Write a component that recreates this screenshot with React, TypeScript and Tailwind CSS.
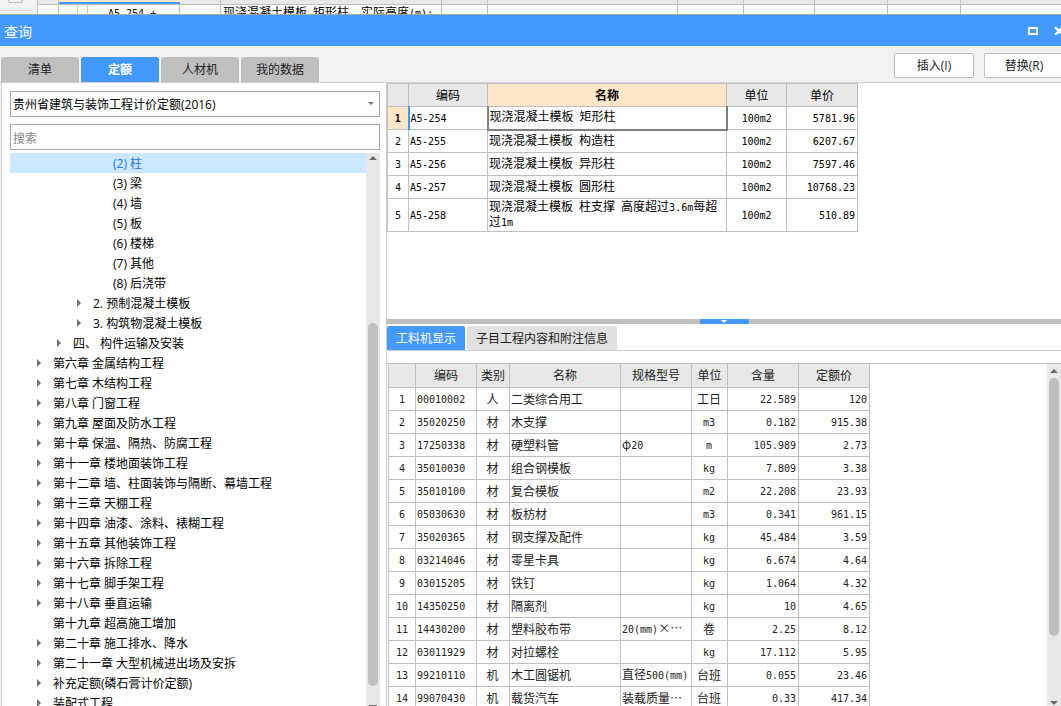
import { Fragment } from 'react';

const tabs = ['清单', '定额', '人材机', '我的数据'];

type TreeNode = { level: number; label: string; leaf?: boolean; selected?: boolean };

const tree: TreeNode[] = [
  { level: 3, label: '(2) 柱', leaf: true, selected: true },
  { level: 3, label: '(3) 梁', leaf: true },
  { level: 3, label: '(4) 墙', leaf: true },
  { level: 3, label: '(5) 板', leaf: true },
  { level: 3, label: '(6) 楼梯', leaf: true },
  { level: 3, label: '(7) 其他', leaf: true },
  { level: 3, label: '(8) 后浇带', leaf: true },
  { level: 2, label: '2. 预制混凝土模板' },
  { level: 2, label: '3. 构筑物混凝土模板' },
  { level: 1, label: '四、 构件运输及安装' },
  { level: 0, label: '第六章 金属结构工程' },
  { level: 0, label: '第七章 木结构工程' },
  { level: 0, label: '第八章 门窗工程' },
  { level: 0, label: '第九章 屋面及防水工程' },
  { level: 0, label: '第十章 保温、隔热、防腐工程' },
  { level: 0, label: '第十一章 楼地面装饰工程' },
  { level: 0, label: '第十二章 墙、柱面装饰与隔断、幕墙工程' },
  { level: 0, label: '第十三章 天棚工程' },
  { level: 0, label: '第十四章 油漆、涂料、裱糊工程' },
  { level: 0, label: '第十五章 其他装饰工程' },
  { level: 0, label: '第十六章 拆除工程' },
  { level: 0, label: '第十七章 脚手架工程' },
  { level: 0, label: '第十八章 垂直运输' },
  { level: 0, label: '第十九章 超高施工增加', leaf: true },
  { level: 0, label: '第二十章 施工排水、降水' },
  { level: 0, label: '第二十一章 大型机械进出场及安拆' },
  { level: 0, label: '补充定额(磷石膏计价定额)' },
  { level: 0, label: '装配式工程' },
];

const indents = ['pl-[25px]', 'pl-[45px]', 'pl-[65px]', 'pl-[85px]'];

const quotas = [
  ['A5-254', '现浇混凝土模板 矩形柱', '100m2', '5781.96'],
  ['A5-255', '现浇混凝土模板 构造柱', '100m2', '6207.67'],
  ['A5-256', '现浇混凝土模板 异形柱', '100m2', '7597.46'],
  ['A5-257', '现浇混凝土模板 圆形柱', '100m2', '10768.23'],
  ['A5-258', '现浇混凝土模板 柱支撑 高度超过3.6m每超过1m', '100m2', '510.89'],
];

const resourceHeads = ['编码', '类别', '名称', '规格型号', '单位', '含量', '定额价'];

const resources = [
  ['00010002', '人', '二类综合用工', '', '工日', '22.589', '120'],
  ['35020250', '材', '木支撑', '', 'm3', '0.182', '915.38'],
  ['17250338', '材', '硬塑料管', 'φ20', 'm', '105.989', '2.73'],
  ['35010030', '材', '组合钢模板', '', 'kg', '7.809', '3.38'],
  ['35010100', '材', '复合模板', '', 'm2', '22.208', '23.93'],
  ['05030630', '材', '板枋材', '', 'm3', '0.341', '961.15'],
  ['35020365', '材', '钢支撑及配件', '', 'kg', '45.484', '3.59'],
  ['03214046', '材', '零星卡具', '', 'kg', '6.674', '4.64'],
  ['03015205', '材', '铁钉', '', 'kg', '1.064', '4.32'],
  ['14350250', '材', '隔离剂', '', 'kg', '10', '4.65'],
  ['14430200', '材', '塑料胶布带', '20(mm)×⋯', '卷', '2.25', '8.12'],
  ['03011929', '材', '对拉螺栓', '', 'kg', '17.112', '5.95'],
  ['99210110', '机', '木工圆锯机', '直径500(mm)', '台班', '0.055', '23.46'],
  ['99070430', '机', '载货汽车', '装载质量⋯', '台班', '0.33', '417.34'],
];

const resourceAlign = [
  'text-left',
  'text-center',
  'text-left',
  'text-left',
  'text-center',
  'text-right',
  'text-right',
];

// Latin runs are set in a half-width mono face next to the 12px CJK glyphs
function Mixed({ text }: { text: string }) {
  return (
    <>
      {text.split(/([\x20-\x7e]+)/).map((part, i) =>
        i % 2 === 1 ? (
          <span key={i} className="font-['DejaVu_Sans_Mono',monospace] text-[10px]">{part}</span>
        ) : (
          <Fragment key={i}>{part}</Fragment>
        )
      )}
    </>
  );
}

function Arrow({ dir, className }: { dir: 'up' | 'down' | 'right'; className: string }) {
  const points = { up: '0,4 4,0 8,4', down: '0,0 8,0 4,4', right: '0,0 4,4 0,8' }[dir];
  return (
    <svg
      viewBox={dir === 'right' ? '0 0 4 8' : '0 0 8 4'}
      className={`fill-current shrink-0 ${className}`}
      aria-hidden="true"
    >
      <polygon points={points} />
    </svg>
  );
}

function SheetBehind() {
  const head = 'border-r border-[#bfbfbf]';
  return (
    <div className="flex h-[14px] shrink-0 overflow-hidden bg-[#f1f1f1]">
      <div className="w-[38px] shrink-0 border-r border-[#bfbfbf] pl-2">
        <div className="h-[3px] w-[15px] rounded-b border border-t-0 border-[#bfbfbf]" />
        <div className="mt-[7px] -ml-2 h-px w-[33px] bg-[#e0e0e0]" />
      </div>
      <div className="flex-1 min-w-0">
        <div className="grid h-[5px] grid-cols-[21px_121px_41px_221px_46px_190px_66px_71px_73px_73px_1fr] border-b border-[#bfbfbf] bg-[#e8e8e8]">
          <span className={head} />
          <span className="border-b-2 border-[#4499ff] bg-[#ffe6c8]" />
          {[...Array(8)].map((_, i) => <span key={i} className={head} />)}
        </div>
        <div className="grid h-6 grid-cols-[21px_121px_41px_221px_46px_190px_66px_71px_73px_73px_1fr] bg-white text-[12px] leading-4">
          <span className={head} />
          <span className={`${head} flex`}>
            <span className="ml-[18px] w-[11px] shrink-0 border-x border-[#f5c878]" />
            <span className="pl-5 whitespace-pre"><Mixed text="A5-254 +" /></span>
          </span>
          <span className={head} />
          <span className={`${head} pl-0.5 whitespace-nowrap`}>
            <Mixed text="现浇混凝土模板 矩形柱　实际高度(m):" />
          </span>
          {[...Array(6)].map((_, i) => <span key={i} className={head} />)}
        </div>
      </div>
    </div>
  );
}

function TitleBar() {
  return (
    <header className="flex h-8 shrink-0 items-center justify-between border-t border-[#a9a9a9] bg-[#4499ff] pl-1 text-white">
      <h1 className="pt-0.5 text-[14px]">查询</h1>
      <div className="flex items-center gap-4">
        <button aria-label="最大化" className="h-2 w-2.5 border-2 border-white" />
        <button aria-label="关闭" className="w-[7px] overflow-hidden">
          <svg width="10" height="8" viewBox="0 0 10 8" stroke="currentColor" strokeWidth="2.4">
            <path d="M1 0l8 8M9 0L1 8" />
          </svg>
        </button>
      </div>
    </header>
  );
}

function Toolbar() {
  return (
    <div className="flex h-[37px] shrink-0 justify-between border-b border-[#d0d0d0] pl-px">
      <div role="tablist" className="flex items-end gap-0.5">
        {tabs.map((tab) => (
          <button
            key={tab}
            role="tab"
            aria-selected={tab === '定额'}
            className={`h-[25px] w-[78px] rounded-t-xs ${
              tab === '定额' ? 'bg-[#4499ff] font-bold text-white' : 'bg-[#bfbfbf] text-[#222]'
            }`}
          >
            {tab}
          </button>
        ))}
      </div>
      <div className="-mr-[3px] flex items-start gap-2.5 pt-[7px]">
        <button className="h-[25px] w-20 rounded-xs border border-[#bfbfbf] bg-white text-[#222]">插入(I)</button>
        <button className="h-[25px] w-20 rounded-xs border border-[#bfbfbf] bg-white text-[#222]">替换(R)</button>
      </div>
    </div>
  );
}

function TreePanel() {
  return (
    <aside className="flex w-[385px] shrink-0 flex-col border-l border-[#d0d0d0] bg-white pt-2 pr-1.5 pl-2 ml-px">
      <div className="relative">
        <select
          aria-label="定额库"
          className="h-[26px] w-full appearance-none border border-[#a9a9a9] bg-white pt-0.5 pl-0.5 text-black"
        >
          <option>贵州省建筑与装饰工程计价定额(2016)</option>
        </select>
        <Arrow dir="down" className="absolute top-[11px] right-1.5 h-[3px] w-1.5 text-[#777]" />
      </div>
      <input
        type="search"
        aria-label="搜索"
        placeholder="搜索"
        className="mt-[7px] h-[26px] w-full border border-[#a9a9a9] pt-0.5 pl-0.5 placeholder:text-[#888]"
      />
      <div className="mt-[3px] flex min-h-0 flex-1">
        <ul role="tree" className="min-w-0 flex-1 overflow-hidden">
          {tree.map((node) => (
            <li
              key={node.label}
              role="treeitem"
              aria-selected={!!node.selected}
              className={`flex h-5 items-center pt-0.5 whitespace-pre ${indents[node.level]} ${
                node.selected ? 'bg-[#cce8ff] text-[#1a73e8]' : 'text-black'
              }`}
            >
              <span className="w-[18px] shrink-0 pb-0.5 pl-0.5">
                {!node.leaf && <Arrow dir="right" className="h-2 w-1 text-[#707070]" />}
              </span>
              {node.label}
            </li>
          ))}
        </ul>
        <div className="flex w-3.5 flex-col items-center bg-[#e8e8e8] pt-[3px] text-[#6a6a72]">
          <Arrow dir="up" className="h-1 w-2" />
          <div className="grow-[163]" />
          <div className="w-2.5 grow-[363] rounded-full bg-[#bfbfbf]" />
          <div className="grow-[19]" />
          <div className="h-px w-2 bg-[#6a6a72]" />
        </div>
      </div>
    </aside>
  );
}

function QuotaTable() {
  const cell = 'border border-[#bfbfbf]';
  return (
    <table className="w-[471px] table-fixed border-collapse text-black">
      <colgroup>
        <col className="w-[21px]" />
        <col className="w-[79px]" />
        <col className="w-[239px]" />
        <col className="w-[60px]" />
        <col className="w-[71px]" />
      </colgroup>
      <thead>
        <tr className="h-[23px] bg-[#e8e8e8]">
          <th className={cell} />
          <th className={`${cell} pt-0.5 font-normal`}>编码</th>
          <th className={`${cell} bg-[#ffe6c8] pt-0.5 font-bold`}>名称</th>
          <th className={`${cell} pt-0.5 font-normal`}>单位</th>
          <th className={`${cell} pt-0.5 font-normal`}>单价</th>
        </tr>
      </thead>
      <tbody>
        {quotas.map(([code, name, unit, price], i) => (
          <tr key={code} className={i === 4 ? 'h-[33px]' : 'h-[23px]'}>
            <th
              className={`${cell} pt-0.5 font-['DejaVu_Sans_Mono',monospace] text-[10px] ${
                i === 0 ? 'border-r-2 border-r-[#4499ff] bg-[#ffe6c8] font-bold' : 'font-normal'
              }`}
            >
              {i + 1}
            </th>
            <td className={`${cell} pl-px`}><Mixed text={code} /></td>
            <td
              className={`pl-px leading-[14px] ${
                i === 0 ? 'border-2 border-t border-[#808080] border-t-[#4499ff]' : cell
              }`}
            >
              <Mixed text={name} />
            </td>
            <td className={`${cell} text-center`}><Mixed text={unit} /></td>
            <td className={`${cell} pr-0.5 text-right`}><Mixed text={price} /></td>
          </tr>
        ))}
      </tbody>
    </table>
  );
}

function ResourceTable() {
  const cell = 'border border-[#bfbfbf]';
  return (
    <table className="ml-px w-[482px] table-fixed border-collapse font-['Noto_Sans_CJK_SC',sans-serif] text-[#222]">
      <colgroup>
        <col className="w-[27px]" />
        <col className="w-[61px]" />
        <col className="w-[33px]" />
        <col className="w-[111px]" />
        <col className="w-[71px]" />
        <col className="w-[36px]" />
        <col className="w-[71px]" />
        <col className="w-[71px]" />
      </colgroup>
      <thead>
        <tr className="h-[23px] bg-[#e8e8e8]">
          <th className={`${cell} border-t-0`} />
          {resourceHeads.map((head) => (
            <th key={head} className={`${cell} border-t-0 font-normal`}>{head}</th>
          ))}
        </tr>
      </thead>
      <tbody>
        {resources.map((row, i) => (
          <tr key={row[0]} className="h-[23px]">
            <th className={`${cell} font-normal`}><Mixed text={String(i + 1)} /></th>
            {row.map((value, j) => (
              <td key={j} className={`${cell} pr-0.5 pl-px whitespace-nowrap ${resourceAlign[j]}`}>
                <Mixed text={value} />
              </td>
            ))}
          </tr>
        ))}
      </tbody>
    </table>
  );
}

export default function App() {
  return (
    <div
      lang="zh-CN"
      className="flex h-screen flex-col overflow-hidden bg-[#f1f1f1] font-['Open_Sans','Noto_Sans_CJK_SC',sans-serif] text-[12px] leading-4"
    >
      <SheetBehind />
      <TitleBar />
      <Toolbar />
      <main className="flex min-h-0 flex-1">
        <TreePanel />
        <div className="flex min-w-0 flex-1 flex-col border-l border-[#d0d0d0] bg-white">
          <section className="h-[236px] shrink-0">
            <QuotaTable />
          </section>
          <div className="flex h-[5px] shrink-0 justify-center bg-[#bfbfbf]">
            <button aria-label="折叠" className="flex w-[49px] items-center justify-center bg-[#4499ff] text-white">
              <Arrow dir="down" className="h-[3px] w-1.5" />
            </button>
          </div>
          <div role="tablist" className="mt-0.5 flex h-[25px] shrink-0 gap-0.5 border-b border-[#d0d0d0]">
            <button role="tab" aria-selected="true" className="w-[78px] rounded-t-xs bg-[#4499ff] pt-0.5 text-white">工料机显示</button>
            <button role="tab" aria-selected="false" className="w-[150px] rounded-t-xs bg-[#e0e0e0] pt-0.5 text-[#222]">子目工程内容和附注信息</button>
          </div>
          <section className="mt-3 flex min-h-0 flex-1 border-t border-[#bfbfbf]">
            <div className="min-w-0 flex-1 overflow-hidden">
              <ResourceTable />
            </div>
            <div className="flex w-3.5 shrink-0 flex-col items-center bg-[#e8e8e8] pt-[5px] pb-px text-[#6a6a72]">
              <Arrow dir="up" className="h-1 w-2" />
              <div className="mt-[5px] w-2.5 grow-[258] rounded-full bg-[#bfbfbf]" />
              <div className="grow-[65]" />
              <Arrow dir="down" className="h-1 w-2" />
            </div>
          </section>
        </div>
      </main>
    </div>
  );
}
